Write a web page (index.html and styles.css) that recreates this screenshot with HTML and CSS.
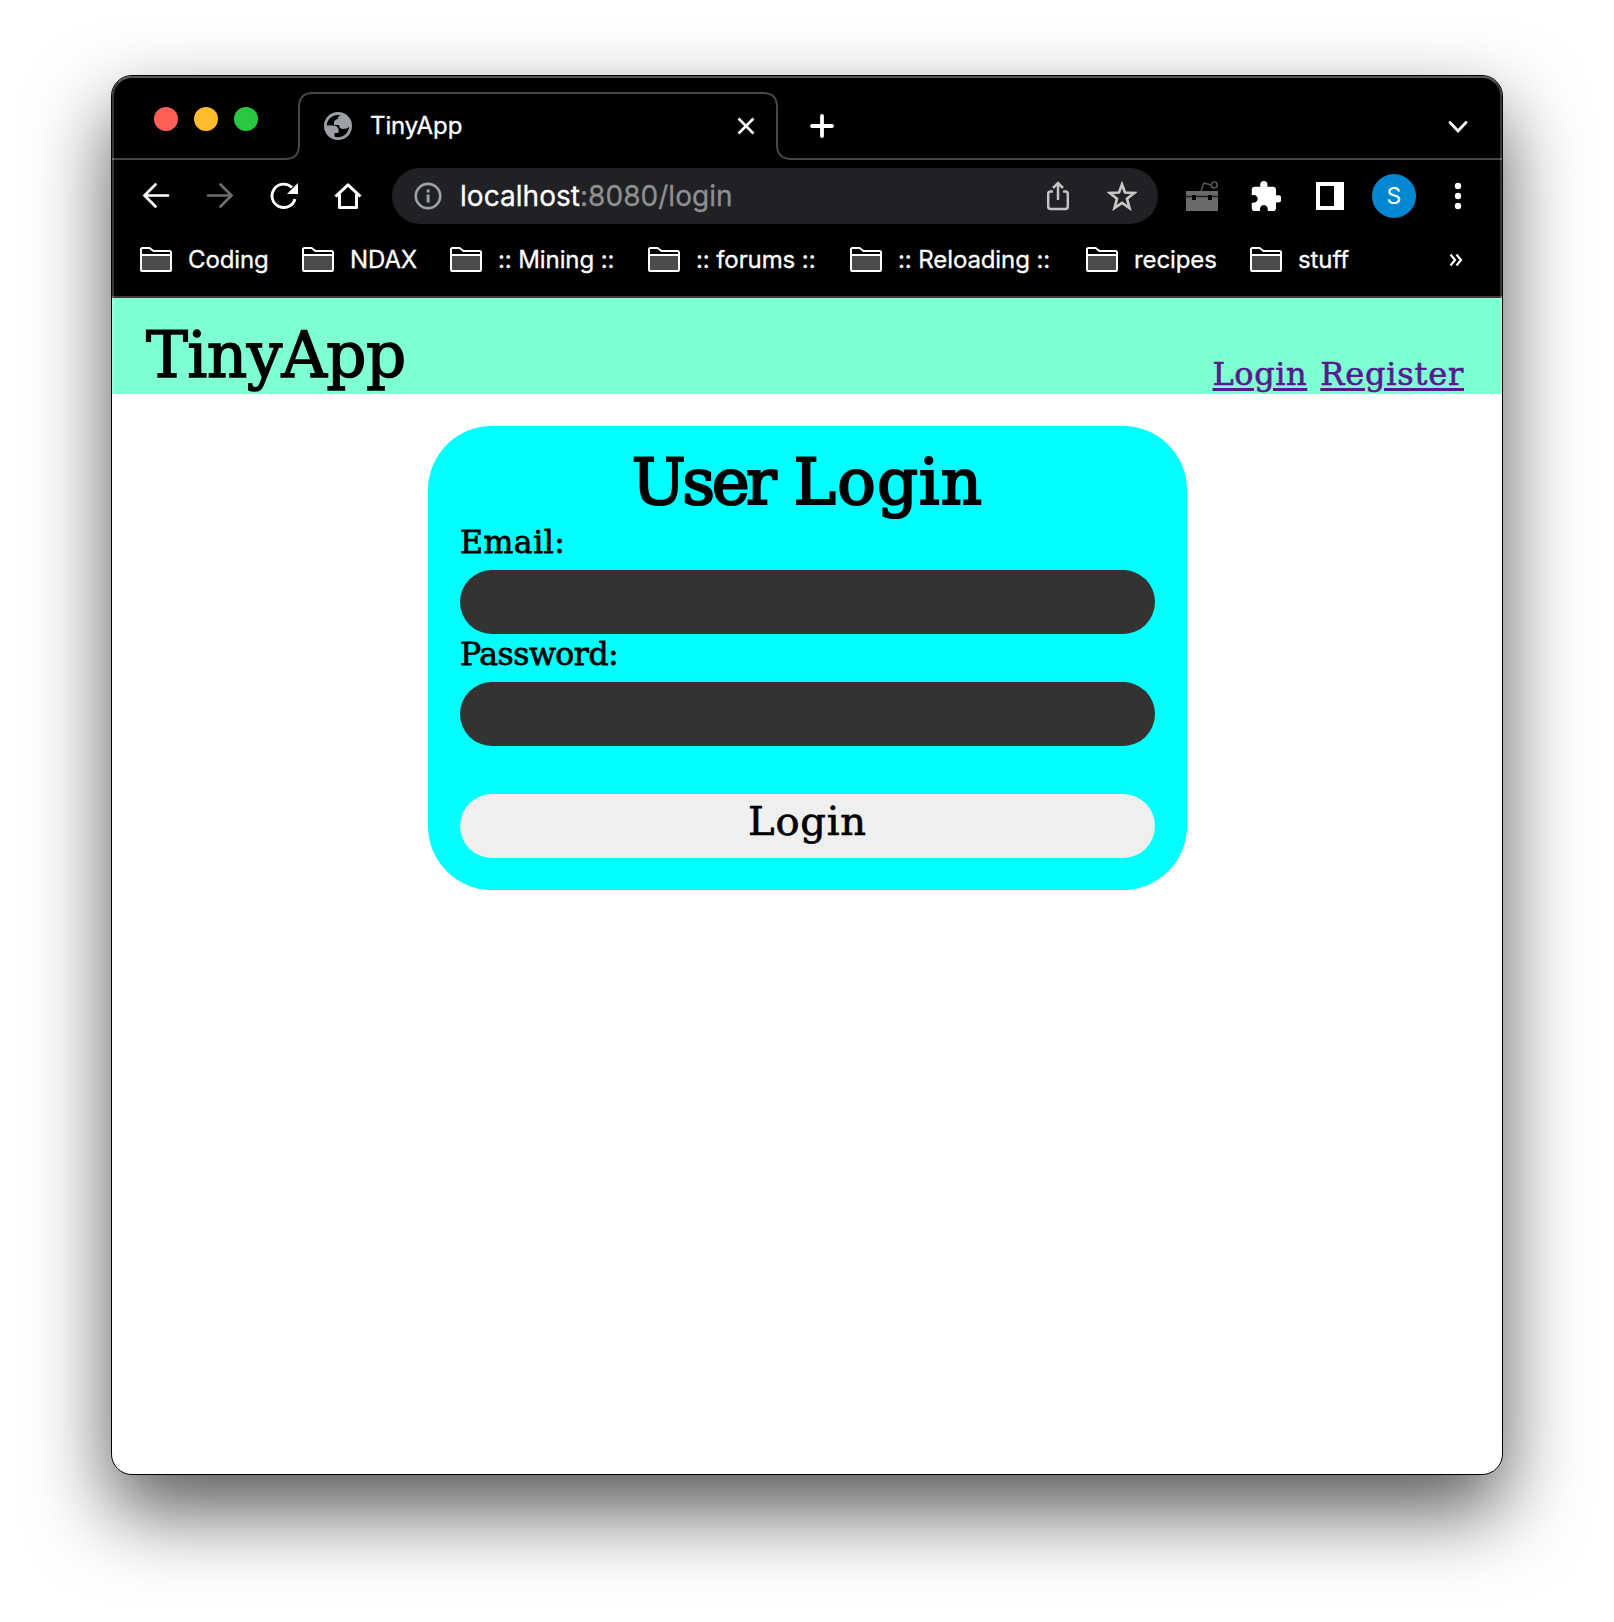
FILE: index.html
```html
<!DOCTYPE html>
<html lang="en">
<head>
<meta charset="utf-8">
<title>TinyApp</title>
<link rel="stylesheet" href="styles.css">
</head>
<body>
<svg class="defs" aria-hidden="true">
  <symbol id="folder" viewBox="0 0 32 26">
    <path d="M2 9H30V23H2Z" fill="#4c4c4c"/>
    <path d="M1 2.500Q1 1 2.500 1H9.500L13.500 4H29.500Q31 4 31 5.500V23Q31 24 30 24H2Q1 24 1 23ZM1 8H31" fill="none" stroke="#fff" stroke-width="2"/>
  </symbol>
</svg>
<div class="window">
  <div class="tabstrip">
    <svg class="tab-outline" viewBox="0 0 1390 84" fill="none" stroke="#474747" stroke-width="2"><path d="M0 83H173Q187 83 187 69V31Q187 17 201 17H651Q665 17 665 31V69Q665 83 680 83H1390"/></svg>
    <div class="lights"><i class="red"></i><i class="yellow"></i><i class="green"></i></div>
    <div class="tab">
      <svg width="28" height="28" viewBox="0 0 28 28"><circle cx="14" cy="14" r="14" fill="#9aa0a6"/><path d="M2.800 13.500C3 8 7 3.500 12.800 2.900L16.500 3.200C14.500 4.200 14 5 14 7C11 7.300 9.500 9 10 13H15C15 15.800 16.800 17 19.500 17C21.500 17 23.500 16.300 25.200 14.800C24.800 20 20.500 25.200 14 25.200L10.500 24.700V21H14.200C15.700 16.500 13.500 13.700 9 13.500Z" fill="#000"/></svg>
      <span>TinyApp</span>
      <svg class="close" width="18" height="18" viewBox="0 0 18 18" stroke="#fff" stroke-width="2.600"><path d="M1.500 1.500 16.500 16.500M16.500 1.500 1.500 16.500"/></svg>
    </div>
    <svg class="plus" width="24" height="24" viewBox="0 0 24 24" stroke="#fff" stroke-width="3.800" stroke-linecap="round"><path d="M12 2V22M2 12H22"/></svg>
    <svg class="chevron" width="20" height="14" viewBox="0 0 20 14" fill="none" stroke="#fff" stroke-width="2.800" stroke-linecap="round"><path d="M2 2.500 10 11 18 2.500"/></svg>
  </div>

  <div class="toolbar">
    <div class="cell"><svg width="28" height="28" viewBox="0 0 28 28" fill="none" stroke="#fff" stroke-width="2.700" stroke-linecap="round"><path d="M26 13.500H2.500M13.500 2.500 2.500 13.500 13.500 24.500"/></svg></div>
    <div class="cell"><svg width="28" height="28" viewBox="0 0 28 28" fill="none" stroke="#6e6e6e" stroke-width="2.700" stroke-linecap="round"><path d="M2 13.500H25.500M14.500 2.500 25.500 13.500 14.500 24.500"/></svg></div>
    <div class="cell"><svg width="28" height="28" viewBox="0 0 28 28"><path d="M22 5.500A11.700 11.700 0 1 0 25 17" fill="none" stroke="#fff" stroke-width="2.900"/><path d="M28 1V12H17Z" fill="#fff"/></svg></div>
    <div class="cell"><svg width="28" height="28" viewBox="0 0 28 28" fill="none" stroke="#fff" stroke-width="3" stroke-linejoin="round"><path d="M1.500 14.500 14 2.800 26.500 14.500M5.500 12V25.500H22.500V12"/></svg></div>
    <div class="address">
      <svg width="28" height="28" viewBox="0 0 28 28"><circle cx="14" cy="14" r="12.200" fill="none" stroke="#9aa0a6" stroke-width="2.700"/><path d="M12.600 7.500h3v3h-3zM12.600 12.500h3v8h-3z" fill="#9aa0a6"/></svg>
      <span class="url"><b>localhost</b>:8080/login</span>
      <svg class="share" width="24" height="30" viewBox="0 0 24 30" fill="none" stroke="#c3c3c3" stroke-width="2.500"><path d="M7 10.500H4.500Q2.200 10.500 2.200 13V25.500Q2.200 28 4.700 28H19.300Q21.800 28 21.800 25.500V13Q21.800 10.500 19.500 10.500H17M12 19V2.500M7 7 12 2 17 7"/></svg>
      <svg class="star" width="30" height="30" viewBox="0 0 30 30"><path d="M15 3.500 18 11.500 27.200 12 20 17.800 22.500 27 15 21.800 7.500 27 10 17.800 2.800 12 12 11.500Z" fill="none" stroke="#c8c8c8" stroke-width="2.700"/></svg>
    </div>
    <div class="cell"><svg width="32" height="32" viewBox="0 0 32 32"><path d="M0 11H32V31H0Z" fill="#6b6b6b"/><path d="M0 16.500H32" stroke="#202020" stroke-width="1.500"/><path d="M6 15h4v5H6zM22 15h4v5h-4z" fill="#000"/><path d="M15 11 18 3 25 5" fill="none" stroke="#555" stroke-width="1.500"/><circle cx="28.300" cy="5" r="3" fill="none" stroke="#555" stroke-width="1.700"/></svg></div>
    <div class="cell"><svg width="30" height="30" viewBox="1.500 1 21 21"><path fill="#fff" d="M20.500 11H19V7c0-1.100-.9-2-2-2h-4V3.500a2.500 2.500 0 0 0-5 0V5H4c-1.100 0-1.990.9-1.990 2v3.800H3.500c1.490 0 2.700 1.210 2.700 2.700s-1.210 2.700-2.700 2.700H2V20c0 1.100.9 2 2 2h3.800v-1.500c0-1.490 1.210-2.700 2.700-2.700 1.490 0 2.700 1.210 2.700 2.700V22H17c1.100 0 2-.9 2-2v-4h1.500a2.500 2.500 0 0 0 0-5z"/></svg></div>
    <div class="cell"><svg width="28" height="28" viewBox="0 0 28 28"><path fill="#fff" fill-rule="evenodd" d="M0 0H28V28H0ZM4 4V24H18V4Z"/></svg></div>
    <div class="cell"><span class="avatar">S</span></div>
    <div class="cell"><svg width="8" height="28" viewBox="0 0 8 28" fill="#fff"><circle cx="4" cy="4" r="3.200"/><circle cx="4" cy="14" r="3.200"/><circle cx="4" cy="24" r="3.200"/></svg></div>
  </div>

  <div class="bookmarks">
    <div class="bm"><svg><use href="#folder"/></svg><span>Coding</span></div>
    <div class="bm"><svg><use href="#folder"/></svg><span>NDAX</span></div>
    <div class="bm"><svg><use href="#folder"/></svg><span>:: Mining ::</span></div>
    <div class="bm"><svg><use href="#folder"/></svg><span>:: forums ::</span></div>
    <div class="bm"><svg><use href="#folder"/></svg><span>:: Reloading ::</span></div>
    <div class="bm"><svg><use href="#folder"/></svg><span>recipes</span></div>
    <div class="bm"><svg><use href="#folder"/></svg><span>stuff</span></div>
    <svg class="more" width="14" height="14" viewBox="0 0 14 14" fill="none" stroke="#fff" stroke-width="2.200"><path d="M1.500 1.500 6 7 1.500 12.500M7.500 1.500 12 7 7.500 12.500"/></svg>
  </div>

  <header class="site-header">
    <div class="brand">TinyApp</div>
    <nav><a class="login-link" href="#">Login</a><a class="register-link" href="#">Register</a></nav>
  </header>
  <main>
    <form class="card">
      <h1><span class="tight">User</span> <span class="loose">Login</span></h1>
      <label class="em" for="email">Email:</label>
      <input id="email" type="email">
      <label class="pw" for="password">Password:</label>
      <input id="password" type="password">
      <button type="button">Login</button>
    </form>
  </main>
</div>
</body>
</html>
```
FILE: styles.css
```css
* { box-sizing: border-box; }
html { background: #fff; }
body {
  margin: 0;
  height: 1622px;
  padding: 75px 111px;
  overflow: hidden;
  font-family: Inter, "Liberation Sans", sans-serif;
}
svg { display: block; flex: none; }
.defs { position: absolute; width: 0; height: 0; }

.window {
  position: relative;
  width: 1392px;
  height: 1400px;
  border: 1px solid #000;
  border-radius: 21px;
  overflow: hidden;
  background: #fff;
  box-shadow: 0 36px 80px rgba(0, 0, 0, .66);
}
/* light bevel along the inside of the frame */
.window::after {
  content: "";
  position: absolute;
  inset: 0;
  border: 2px solid rgba(255, 255, 255, .22);
  border-top-color: rgba(255, 255, 255, .34);
  border-radius: 20px;
  pointer-events: none;
}

.tabstrip {
  position: relative;
  display: flex;
  height: 84px;
  padding: 16px 34px 0 42px;
  background: #000;
}
.tab-outline { position: absolute; left: 0; top: 0; width: 1390px; height: 84px; }
.lights { display: flex; gap: 16px; width: 144px; padding-top: 15px; }
.lights i { width: 24px; height: 24px; border-radius: 50%; }
.red { background: #ff5f57; }
.yellow { background: #febc2e; }
.green { background: #28c840; }
.tab {
  display: flex;
  align-items: center;
  width: 480px;
  height: 68px;
  padding: 0 23px 0 26px;
  color: #fff;
  font-size: 24px;
}
.tab span { margin: -2px 0 0 18px; letter-spacing: -.1px; -webkit-text-stroke: .3px #fff; }
.close { margin-left: auto; }
.plus { margin: 22px 0 0 32px; }
.chevron { margin: 28px 0 0 auto; }

.toolbar {
  display: flex;
  align-items: center;
  height: 72px;
  padding: 0 12px;
  background: #000;
}
.cell { display: flex; align-items: center; justify-content: center; width: 64px; flex: none; }
.address {
  display: flex;
  align-items: center;
  flex: 1;
  height: 56px;
  margin: 0 12px;
  padding: 0 21px 0 22px;
  border-radius: 28px;
  background: #202124;
}
.url { margin-left: 18px; font-size: 28px; letter-spacing: .04px; color: #8e8f91; white-space: nowrap; -webkit-text-stroke: .3px; }
.url b { font-weight: 400; color: #fff; }
.share { margin-left: auto; }
.star { margin-left: 37px; }
.avatar {
  width: 44px;
  height: 44px;
  border-radius: 50%;
  background: #0288d1;
  color: #fff;
  font-size: 23px;
  line-height: 44px;
  text-align: center;
}

.bookmarks {
  display: grid;
  grid-template-columns: 162px 148px 198px 202px 236px 164px 199px 14px;
  align-items: center;
  height: 66px;
  padding: 0 0 9px 28px;
  border-bottom: 2px solid #3c3c3c;
  background: #000;
  color: #fff;
  font-size: 24px;
  letter-spacing: -.1px;
  -webkit-text-stroke: .3px #fff;
}
.bm { display: flex; align-items: center; gap: 16px; white-space: nowrap; }
.bm svg { width: 32px; height: 26px; }

.site-header {
  display: flex;
  align-items: flex-end;
  justify-content: space-between;
  height: 96px;
  padding: 0 38px 0 34px;
  background: #7fffd4;
  font-family: "DejaVu Serif", serif;
}
.brand { font-size: 63px; line-height: 77px; letter-spacing: -.7px; -webkit-text-stroke: 1.4px #000; }
nav { display: flex; gap: 13px; font-size: 32px; line-height: 40px; -webkit-text-stroke: .6px #551a8b; }
nav a { color: #551a8b; text-decoration-thickness: 2.500px; text-underline-offset: 3px; }
.login-link { letter-spacing: .6px; }
.register-link { letter-spacing: .8px; }

main { padding: 32px 315px 0 316px; }
.card {
  display: flex;
  flex-direction: column;
  height: 464px;
  padding: 32px;
  border-radius: 64px;
  background: #0ff;
  font-family: "DejaVu Serif", serif;
}
h1 {
  height: 64px;
  margin: 0;
  font-size: 64px;
  font-weight: 400;
  line-height: 48px;
  text-align: center;
  -webkit-text-stroke: 2.200px #000;
}
.tight { letter-spacing: -3.500px; }
.loose { letter-spacing: 1.200px; }
label { height: 48px; font-size: 31.500px; line-height: 40px; -webkit-text-stroke: .8px #000; }
.em { letter-spacing: .5px; }
.pw { letter-spacing: -.5px; }
input, button { width: 100%; height: 64px; border: 0; border-radius: 32px; }
input { padding: 0 24px; background: #333; color: #fff; }
button {
  padding: 0 0 10px;
  margin-top: 48px;
  background: #efefef;
  color: #000;
  font: 40px/54px "DejaVu Serif", serif;
  letter-spacing: .8px;
  -webkit-text-stroke: .7px #000;
}
```
